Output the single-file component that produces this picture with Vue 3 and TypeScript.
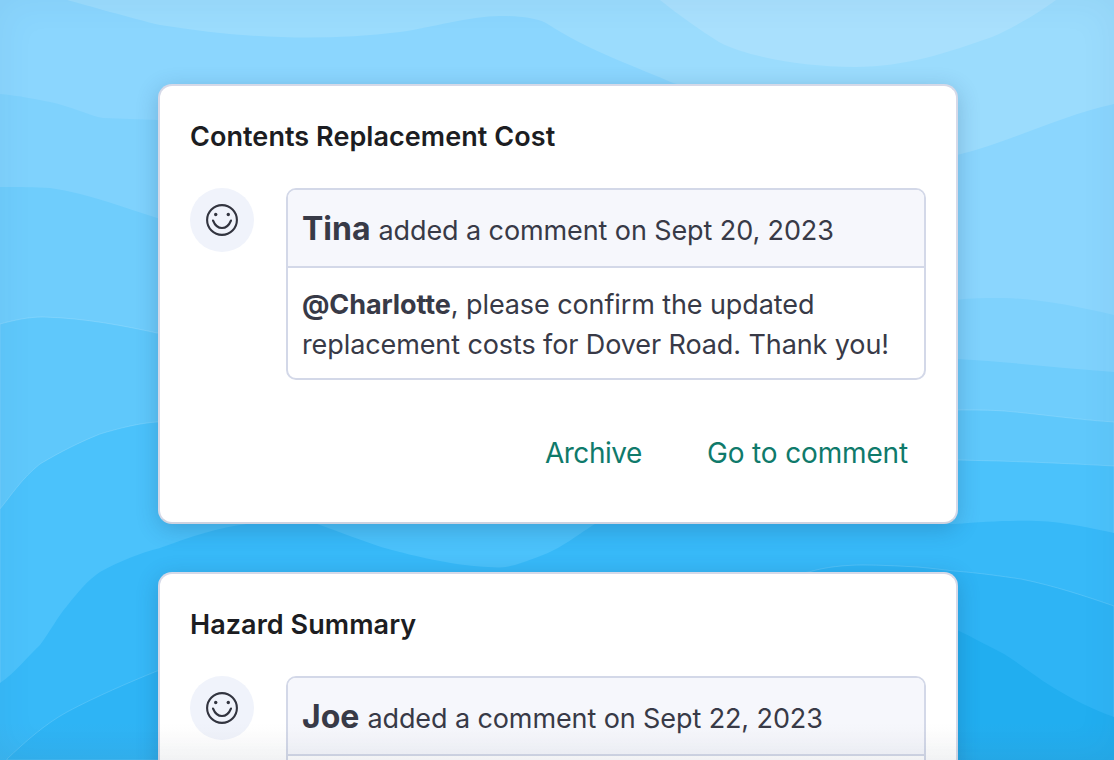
<script setup lang="ts">
interface Item { title: string; name: string; date: string }
const items: Item[] = [
  { title: 'Contents Replacement Cost', name: 'Tina', date: 'Sept 20, 2023' },
  { title: 'Hazard Summary', name: 'Joe', date: 'Sept 22, 2023' },
]
</script>

<template>
  <div class="page">
    <svg class="waves" viewBox="0 0 1114 760" aria-hidden="true">
      <rect width="1114" height="760" fill="#9bdcfd" />
      <path d="M660 0C680 16 700 30 719 42C745 56 800 67 855 67C905 67 950 52 992 37C1015 27 1040 12 1056 0Z" fill="#a9e0fd" />
      <path d="M67 0C90 6 130 18 160 25C240 38 320 42 400 32C430 28 470 16 500 16C520 16 535 18 546 23C590 52 640 68 673 83L957 155C1010 142 1060 116 1114 104V760H0V0Z" fill="#8bd6fe" />
      <path d="M0 94C20 96 35 99 50 102C70 106 90 116 103 118C120 119 140 119 157 120L957 300C970 298 990 298 1004 298C1040 299 1080 307 1114 315V760H0Z" fill="#7fd2fd" />
      <path d="M0 187C20 187 35 187 50 188C90 194 125 208 157 218L957 359C1010 362 1060 368 1114 372V760H0Z" fill="#6fcdfc" />
      <path class="edge" d="M0 324C15 320 28 317 43 317C85 318 125 326 157 333L957 410C975 410 990 410 1004 411C1040 414 1080 420 1114 422V760H0Z" fill="#5fc8fb" />
      <path class="edge" d="M0 509C10 497 22 478 40 464C60 452 80 442 100 434C120 428 140 423 157 422L957 460C1010 461 1060 463 1114 466V760H0Z" fill="#4bc2fb" />
      <path d="M0 683C15 673 28 656 40 645C50 632 58 616 67 606C78 592 88 580 100 572C120 561 140 553 160 548C190 537 220 527 247 524C270 521 300 520 317 524C340 532 360 540 381 547C420 558 460 566 488 567C500 568 507 567 515 565C530 560 545 555 558 548C575 538 585 530 595 524L954 524C985 522 1010 520 1037 521C1065 522 1090 528 1114 533V760H0Z" fill="#37b9f8" />
      <path class="edge" d="M7 759C25 742 45 724 67 712C95 697 130 682 157 671L809 572C825 567 845 565 863 565C880 565 900 566 917 567C930 568 945 570 954 571C980 573 1000 576 1021 579C1055 586 1085 596 1114 606V760H7Z" fill="#2eb4f5" />
      <path d="M158 760V660L957 630C972 637 988 646 1004 654C1020 664 1036 677 1054 688C1072 699 1092 709 1114 717V760Z" fill="#21aef0" />
    </svg>
    <div class="stack">
      <section v-for="item in items" :key="item.title" class="card">
        <h2 class="title">{{ item.title }}</h2>
        <div class="row">
          <div class="avatar">
            <svg width="32" height="32" viewBox="0 0 32 32" fill="none" stroke="#32343f" stroke-width="2.1" stroke-linecap="round">
              <circle cx="16" cy="16" r="14.9" />
              <path d="M7 16.5C9 21.5 12.5 24 16 24C19.5 24 23 21.5 25 16.5" />
              <circle cx="9.7" cy="10.5" r="1.7" fill="#32343f" stroke="none" />
              <circle cx="22.3" cy="10.5" r="1.7" fill="#32343f" stroke="none" />
            </svg>
          </div>
          <div class="comment">
            <div class="head"><strong class="name">{{ item.name }}</strong><span>added a comment on {{ item.date }}</span></div>
            <div class="body"><strong>@Charlotte</strong>, please confirm the updated replacement costs for Dover Road. Thank you!</div>
          </div>
        </div>
        <div class="actions">
          <a class="action archive">Archive</a>
          <a class="action">Go to comment</a>
        </div>
      </section>
    </div>
    <div class="vignette"></div>
  </div>
</template>

<style>
html, body { margin: 0; }
</style>

<style scoped>
.page {
  position: relative;
  width: 1114px;
  height: 760px;
  overflow: hidden;
  font-family: "Inter", "Liberation Sans", sans-serif;
  color: #383a47;
}
.waves { position: absolute; inset: 0; width: 100%; height: 100%; }
.edge { stroke: rgba(255, 255, 255, .14); stroke-width: 1; }
.stack {
  position: relative;
  display: flex;
  flex-direction: column;
  gap: 48px;
  width: 800px;
  margin: 0 auto;
  padding-top: 84px;
  transform: translateX(1px);
}
.card {
  box-sizing: border-box;
  height: 440px;
  flex: none;
  padding: 31px 30px 30px;
  background: #fff;
  border: 2px solid #d5d9e8;
  border-bottom-color: #cfd3e0;
  border-radius: 14px;
  box-shadow: 0 5px 22px rgba(20, 60, 100, .24);
}
.title {
  margin: 0;
  font-size: 27px;
  line-height: 40px;
  font-weight: 600;
  color: #1c1d22;
  letter-spacing: .06px;
}
.row { display: flex; gap: 32px; margin-top: 31px; }
.avatar {
  flex: none;
  display: flex;
  align-items: center;
  justify-content: center;
  width: 64px;
  height: 64px;
  border-radius: 50%;
  background: #f0f3fb;
}
.comment {
  flex: 1;
  border: 2px solid #d3d8e8;
  border-radius: 10px;
  overflow: hidden;
}
.head {
  display: flex;
  align-items: baseline;
  gap: 8px;
  height: 78px;
  box-sizing: border-box;
  padding: 0 14px;
  line-height: 78px;
  background: #f6f7fc;
  border-bottom: 2px solid #d3d8e8;
  font-size: 27px;
  letter-spacing: -.1px;
  white-space: nowrap;
}
.name { font-size: 32px; font-weight: 700; letter-spacing: 0; }
.body {
  padding: 17px 14px 13px;
  font-size: 27px;
  line-height: 40px;
  letter-spacing: -.1px;
}
.body strong { font-weight: 700; }
.actions {
  display: flex;
  justify-content: flex-end;
  gap: 65px;
  margin-top: 53px;
  padding-right: 18px;
}
.action {
  font-size: 28px;
  line-height: 40px;
  color: #0f7a6b;
  letter-spacing: -.15px;
}
.archive { letter-spacing: -.45px; }
.vignette {
  position: absolute;
  inset: 0;
  pointer-events: none;
  box-shadow: inset 0 0 36px rgba(40, 90, 130, .07);
  background: linear-gradient(to bottom, rgba(120, 120, 120, 0) 95%, rgba(120, 120, 120, .05) 100%);
}
</style>
